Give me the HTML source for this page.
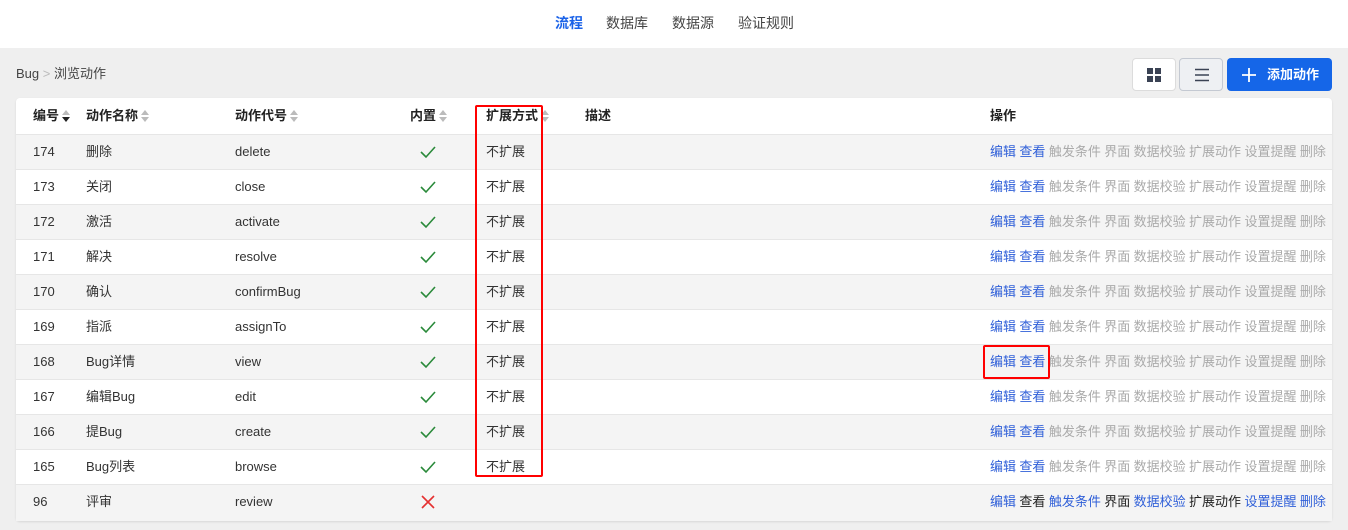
<!DOCTYPE html>
<html><head><meta charset="utf-8"><style>
*{margin:0;padding:0;box-sizing:border-box}
body{width:1348px;height:530px;background:#efefef;font-family:"Liberation Sans","Noto Sans CJK SC",sans-serif;font-size:13px;color:#333;position:relative;overflow:hidden}
.top{position:absolute;left:0;top:0;width:1348px;height:48px;background:#fff}
.nav{position:absolute;top:0;line-height:46px;font-size:14px;color:#444}
.abs{position:absolute}
.card{position:absolute;left:16px;top:98px;width:1316px;height:423px;background:#fff;border-radius:4px;box-shadow:0 1px 2px rgba(0,0,0,.1)}
.row{position:absolute;left:16px;width:1316px;height:35px;border-top:1px solid #e6e6e6}
.row span{position:absolute;top:0;line-height:34px;height:34px}
.g{background:#f4f4f4}
.ops{left:974px;white-space:nowrap}
.ops i{font-style:normal;margin-right:3.4px;color:#aaa}
.ops i.b{color:#2f5fd8}
.ops i.d{color:#222}
.hd{position:absolute;top:98px;line-height:36px;font-weight:bold;color:#222}
.sort{display:inline-block;vertical-align:middle;margin-left:3px;width:8px;height:12px;position:relative;top:-1px}
.sort:before{content:"";position:absolute;left:0;top:0;border:4px solid transparent;border-bottom:5px solid #bbb;border-top:0}
.sort:after{content:"";position:absolute;left:0;top:7px;border:4px solid transparent;border-top:5px solid #bbb;border-bottom:0}
.sd:after{border-top-color:#222}
.red{position:absolute;border:2px solid #f00;border-radius:2px}
.ck{display:flex;align-items:center}
</style></head><body>
<div class="top"></div>
<div class="nav" style="left:555px;color:#1a62e8;font-weight:bold">流程</div>
<div class="nav" style="left:606px">数据库</div>
<div class="nav" style="left:672px">数据源</div>
<div class="nav" style="left:738px">验证规则</div>
<div class="abs" style="left:16px;top:64px;line-height:20px;color:#444">Bug <span style="color:#bbb">&gt;</span> 浏览动作</div>
<div class="abs" style="left:1132px;top:58px;width:44px;height:33px;background:#fff;border:1px solid #dcdcdc;border-radius:4px">
<svg width="14" height="14" style="position:absolute;left:14px;top:9px"><rect x="0" y="0" width="6" height="6" fill="#3a4254"/><rect x="8" y="0" width="6" height="6" fill="#3a4254"/><rect x="0" y="8" width="6" height="6" fill="#3a4254"/><rect x="8" y="8" width="6" height="6" fill="#3a4254"/></svg></div>
<div class="abs" style="left:1179px;top:58px;width:44px;height:33px;background:#eef0f3;border:1px solid #c4c9d2;border-radius:4px">
<svg width="16" height="14" style="position:absolute;left:14px;top:9px"><path d="M1 1.5H15M1 7H15M1 12.5H15" stroke="#3a4254" stroke-width="1.6"/></svg></div>
<div class="abs" style="left:1227px;top:58px;width:105px;height:33px;background:#1566e8;border-radius:4px;color:#fff;font-weight:bold">
<svg width="14" height="14" style="position:absolute;left:15px;top:10px"><path d="M7 0V14M0 7H14" stroke="#fff" stroke-width="1.8"/></svg>
<span style="position:absolute;left:40px;top:0;line-height:33px">添加动作</span></div>
<div class="card"></div>
<div class="hd" style="left:33px">编号<span class="sort sd"></span></div>
<div class="hd" style="left:86px">动作名称<span class="sort"></span></div>
<div class="hd" style="left:235px">动作代号<span class="sort"></span></div>
<div class="hd" style="left:410px">内置<span class="sort"></span></div>
<div class="hd" style="left:486px">扩展方式<span class="sort"></span></div>
<div class="hd" style="left:585px">描述</div>
<div class="hd" style="left:990px">操作</div>
<div class="row g" style="top:134px"><span style="left:17px">174</span><span style="left:70px">删除</span><span style="left:219px">delete</span><span class="ck" style="left:404px"><svg width="16" height="14"><path d="M1 7L6 12L15 2" stroke="#2a8a3a" stroke-width="1.6" fill="none"/></svg></span><span style="left:470px">不扩展</span><span class="ops"><i class="b">编辑</i><i class="b">查看</i><i>触发条件</i><i>界面</i><i>数据校验</i><i>扩展动作</i><i>设置提醒</i><i>删除</i></span></div>
<div class="row" style="top:169px"><span style="left:17px">173</span><span style="left:70px">关闭</span><span style="left:219px">close</span><span class="ck" style="left:404px"><svg width="16" height="14"><path d="M1 7L6 12L15 2" stroke="#2a8a3a" stroke-width="1.6" fill="none"/></svg></span><span style="left:470px">不扩展</span><span class="ops"><i class="b">编辑</i><i class="b">查看</i><i>触发条件</i><i>界面</i><i>数据校验</i><i>扩展动作</i><i>设置提醒</i><i>删除</i></span></div>
<div class="row g" style="top:204px"><span style="left:17px">172</span><span style="left:70px">激活</span><span style="left:219px">activate</span><span class="ck" style="left:404px"><svg width="16" height="14"><path d="M1 7L6 12L15 2" stroke="#2a8a3a" stroke-width="1.6" fill="none"/></svg></span><span style="left:470px">不扩展</span><span class="ops"><i class="b">编辑</i><i class="b">查看</i><i>触发条件</i><i>界面</i><i>数据校验</i><i>扩展动作</i><i>设置提醒</i><i>删除</i></span></div>
<div class="row" style="top:239px"><span style="left:17px">171</span><span style="left:70px">解决</span><span style="left:219px">resolve</span><span class="ck" style="left:404px"><svg width="16" height="14"><path d="M1 7L6 12L15 2" stroke="#2a8a3a" stroke-width="1.6" fill="none"/></svg></span><span style="left:470px">不扩展</span><span class="ops"><i class="b">编辑</i><i class="b">查看</i><i>触发条件</i><i>界面</i><i>数据校验</i><i>扩展动作</i><i>设置提醒</i><i>删除</i></span></div>
<div class="row g" style="top:274px"><span style="left:17px">170</span><span style="left:70px">确认</span><span style="left:219px">confirmBug</span><span class="ck" style="left:404px"><svg width="16" height="14"><path d="M1 7L6 12L15 2" stroke="#2a8a3a" stroke-width="1.6" fill="none"/></svg></span><span style="left:470px">不扩展</span><span class="ops"><i class="b">编辑</i><i class="b">查看</i><i>触发条件</i><i>界面</i><i>数据校验</i><i>扩展动作</i><i>设置提醒</i><i>删除</i></span></div>
<div class="row" style="top:309px"><span style="left:17px">169</span><span style="left:70px">指派</span><span style="left:219px">assignTo</span><span class="ck" style="left:404px"><svg width="16" height="14"><path d="M1 7L6 12L15 2" stroke="#2a8a3a" stroke-width="1.6" fill="none"/></svg></span><span style="left:470px">不扩展</span><span class="ops"><i class="b">编辑</i><i class="b">查看</i><i>触发条件</i><i>界面</i><i>数据校验</i><i>扩展动作</i><i>设置提醒</i><i>删除</i></span></div>
<div class="row g" style="top:344px"><span style="left:17px">168</span><span style="left:70px">Bug详情</span><span style="left:219px">view</span><span class="ck" style="left:404px"><svg width="16" height="14"><path d="M1 7L6 12L15 2" stroke="#2a8a3a" stroke-width="1.6" fill="none"/></svg></span><span style="left:470px">不扩展</span><span class="ops"><i class="b">编辑</i><i class="b">查看</i><i>触发条件</i><i>界面</i><i>数据校验</i><i>扩展动作</i><i>设置提醒</i><i>删除</i></span></div>
<div class="row" style="top:379px"><span style="left:17px">167</span><span style="left:70px">编辑Bug</span><span style="left:219px">edit</span><span class="ck" style="left:404px"><svg width="16" height="14"><path d="M1 7L6 12L15 2" stroke="#2a8a3a" stroke-width="1.6" fill="none"/></svg></span><span style="left:470px">不扩展</span><span class="ops"><i class="b">编辑</i><i class="b">查看</i><i>触发条件</i><i>界面</i><i>数据校验</i><i>扩展动作</i><i>设置提醒</i><i>删除</i></span></div>
<div class="row g" style="top:414px"><span style="left:17px">166</span><span style="left:70px">提Bug</span><span style="left:219px">create</span><span class="ck" style="left:404px"><svg width="16" height="14"><path d="M1 7L6 12L15 2" stroke="#2a8a3a" stroke-width="1.6" fill="none"/></svg></span><span style="left:470px">不扩展</span><span class="ops"><i class="b">编辑</i><i class="b">查看</i><i>触发条件</i><i>界面</i><i>数据校验</i><i>扩展动作</i><i>设置提醒</i><i>删除</i></span></div>
<div class="row" style="top:449px"><span style="left:17px">165</span><span style="left:70px">Bug列表</span><span style="left:219px">browse</span><span class="ck" style="left:404px"><svg width="16" height="14"><path d="M1 7L6 12L15 2" stroke="#2a8a3a" stroke-width="1.6" fill="none"/></svg></span><span style="left:470px">不扩展</span><span class="ops"><i class="b">编辑</i><i class="b">查看</i><i>触发条件</i><i>界面</i><i>数据校验</i><i>扩展动作</i><i>设置提醒</i><i>删除</i></span></div>
<div class="row g" style="top:484px;height:37px"><span style="left:17px">96</span><span style="left:70px">评审</span><span style="left:219px">review</span><span class="ck" style="left:405px"><svg width="14" height="14"><path d="M1 1L13 13M13 1L1 13" stroke="#e53030" stroke-width="1.6"/></svg></span><span class="ops"><i class="b">编辑</i><i class="d">查看</i><i class="b">触发条件</i><i class="d">界面</i><i class="b">数据校验</i><i class="d">扩展动作</i><i class="b">设置提醒</i><i class="b">删除</i></span></div>
<div class="red" style="left:475px;top:105px;width:68px;height:372px"></div>
<div class="red" style="left:983px;top:345px;width:67px;height:34px"></div>
</body></html>
